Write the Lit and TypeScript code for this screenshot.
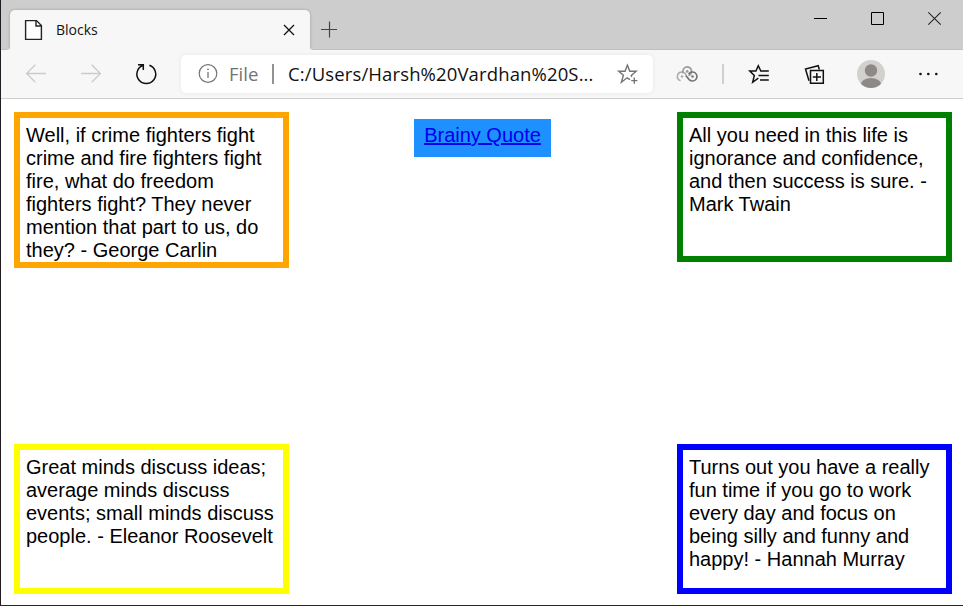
import { LitElement, html, css, svg } from "lit";
import { customElement, property } from "lit/decorators.js";

const icon = (box: string, w: number, h: number, body: unknown) =>
  html`<svg viewBox=${box} width=${w} height=${h} fill="none" stroke-linejoin="miter">${body}</svg>`;

@customElement("quote-card")
class QuoteCard extends LitElement {
  @property({ reflect: true }) tone = "orange";
  static styles = css`
    :host {
      display: block;
      box-sizing: border-box;
      width: 275px;
      min-height: 150px;
      padding: 6px 6px 0;
      border: 6px solid orange;
      font: 20px/23px "Liberation Sans", Arial, sans-serif;
      color: #000;
    }
    :host([tone="green"]) { border-color: green; }
    :host([tone="yellow"]) { border-color: yellow; }
    :host([tone="blue"]) { border-color: blue; }
  `;
  render() {
    return html`<slot></slot>`;
  }
}

@customElement("title-bar")
class TitleBar extends LitElement {
  static styles = css`
    :host {
      display: flex;
      height: 50px;
      box-sizing: border-box;
      background: #cdcdcd;
      box-shadow: inset 0 -1px #c0c0c0;
      font-family: "Open Sans", "Noto Sans", sans-serif;
    }
    svg { display: block; flex: none; }
    .tab {
      display: flex;
      align-items: center;
      box-sizing: border-box;
      width: 300px;
      height: 40px;
      margin: 10px 0 0 9px;
      padding: 0 15px 0 14px;
      background: #f7f7f7;
      border-radius: 5px 5px 0 0;
      box-shadow: 0 0 3px rgba(0, 0, 0, 0.25);
      clip-path: inset(-4px -4px 0 -4px);
    }
    .label {
      flex: 1;
      margin-left: 13px;
      font-size: 14px;
      letter-spacing: 0;
      line-height: 20px;
      color: #111;
    }
    .flare { align-self: flex-end; }
    .left { margin: 0 -4px 0 5px; }
    .left + .tab { margin-left: 4px; }
    .plus { margin: 20px 0 0 6px; }
    .controls { display: flex; gap: 43px; margin: 11px 21px 0 auto; }
  `;
  render() {
    return html`
      <svg class="flare left" width="4" height="4" viewBox="0 0 4 4"><path d="M0 4A4 4 0 0 0 4 0V4Z" fill="#f7f7f7" /></svg>
      <div class="tab">
        ${icon("24 19 19 22", 19, 22, svg`<path d="M25.6 20.6H36.5L41.4 25.5V39.4H25.6Z" fill="#fff" stroke="#222" stroke-width="1.4"/><path d="M36 20.5V26H41.5" stroke="#222" stroke-width="1.4"/>`)}
        <span class="label">Blocks</span>
        ${icon("283 25 12 12", 12, 12, svg`<path d="M284 26L294 36M294 26L284 36" stroke="#111" stroke-width="1.3"/>`)}
      </div>
      <svg class="flare" width="4" height="4" viewBox="0 0 4 4"><path d="M4 4A4 4 0 0 1 0 0V4Z" fill="#f7f7f7" /></svg>
      <div class="plus">
        ${icon("320 20 18 18", 18, 18, svg`<path d="M321 29.5H337M329.5 21.5V37.5" stroke="#444" stroke-width="1.2"/>`)}
      </div>
      <div class="controls">
        ${icon("814 11 14 15", 14, 15, svg`<path d="M814 18.5H827" stroke="#000"/>`)}
        ${icon("871 11 14 15", 14, 15, svg`<path d="M871.5 12.5H883.5V24.5H871.5Z" stroke="#000"/>`)}
        ${icon("928 11 14 15", 14, 15, svg`<path d="M928.3 12.3L940.7 24.7M940.7 12.3L928.3 24.7" stroke="#222" stroke-width="1.1"/>`)}
      </div>
    `;
  }
}

@customElement("tool-bar")
class ToolBar extends LitElement {
  static styles = css`
    :host {
      display: flex;
      align-items: center;
      height: 49px;
      box-sizing: border-box;
      border-bottom: 1px solid #cfcfcf;
      background: #f7f7f7;
      font-family: "Open Sans", "Noto Sans", sans-serif;
    }
    svg { display: block; flex: none; }
    .nav { display: flex; gap: 27px; margin: 0 21px; }
    .address {
      display: flex;
      align-items: center;
      box-sizing: border-box;
      width: 472px;
      height: 38px;
      padding: 0 11px 0 13px;
      background: #fff;
      border-radius: 5px;
      box-shadow: 0 0 4px rgba(0, 0, 0, 0.07);
      font-size: 18.5px;
      line-height: 24px;
      white-space: nowrap;
    }
    .scheme { width: 43px; margin-left: 7px; color: #737373; }
    .bar { width: 2px; height: 20px; background: #929292; }
    .url { flex: 1; margin-left: 14px; color: #111; letter-spacing: 0.13px; }
    .extension { margin-left: 20px; }
    .divider { width: 2px; height: 20px; margin: 0 21px; background: #cfcfcf; }
    .actions { display: flex; gap: 28px; }
  `;
  render() {
    return html`
      <div class="nav">
        ${icon("22 60 28 28", 28, 28, svg`<path d="M46 73.5H27M35.3 64.7L26.6 73.5L35.3 82.3" stroke="#cbcbcb" stroke-width="1.3"/>`)}
        ${icon("77 60 28 28", 28, 28, svg`<path d="M81 73.5H100M91.7 64.7L100.4 73.5L91.7 82.3" stroke="#cbcbcb" stroke-width="1.3"/>`)}
        ${icon("132 60 28 28", 28, 28, svg`<path d="M149.4 65.3A9.4 9.4 0 1 1 143.2 65.3M138 64.7H143.3V70" stroke="#111" stroke-width="1.5"/>`)}
      </div>
      <div class="address">
        ${icon("194 60 28 28", 28, 28, svg`<circle cx="208" cy="73.5" r="8.8" stroke="#747474" stroke-width="1.2"/><path d="M208 72V78" stroke="#747474" stroke-width="1.3"/><circle cx="208" cy="69.3" r=".9" fill="#747474"/>`)}
        <span class="scheme">File</span>
        <span class="bar"></span>
        <span class="url">C:/Users/Harsh%20Vardhan%20S...</span>
        ${icon("614 60 28 28", 28, 28, svg`<path d="M630 79.6L627.2 77.8L621.4 82.2L623.4 75.3L618.7 71.2H625L627.4 65.2L629.8 71.2H636.2L631.3 75.5L631.7 77" stroke="#747474" stroke-width="1.4"/><path d="M631.2 80.6H637.4M634.3 77.5V83.7" stroke="#747474" stroke-width="1.4"/>`)}
      </div>
      <div class="extension">
        ${icon("673 60 28 28", 28, 28, svg`
          <path d="M680.6 80.7A4.4 4.4 0 1 1 686.2 76.3" stroke="#b0b0b0" stroke-width="1.7"/>
          <path d="M683.2 73.2A4.4 4.4 0 1 1 688.4 75.6" stroke="#9c9c9c" stroke-width="1.7"/>
          <path d="M686 75.8L689.2 79.6A4.5 4.5 0 1 0 688.6 74.2" stroke="#777" stroke-width="1.7"/>
          <circle cx="682" cy="76.5" r="1.2" fill="#aaa"/><circle cx="687.2" cy="71.4" r="1.3" fill="#999"/><circle cx="692.5" cy="76.5" r="1.3" fill="#777"/>`)}
      </div>
      <div class="divider"></div>
      <div class="actions">
        ${icon("745 60 28 28", 28, 28, svg`<path d="M760.8 71L758.3 65.7L755.9 71H749.8L754.3 75.4L752.7 82.3L758.3 78.2M760.2 71.1H768.8M758.5 75.6H768.8M760 80.1H768.8" stroke="#111" stroke-width="1.5"/>`)}
        ${icon("801 60 28 28", 28, 28, svg`<path d="M809 80.7L805.5 69L818.2 65.7L819.3 69.5" stroke="#111" stroke-width="1.5"/><path d="M810.5 70.5H823.3V83.3H810.5ZM816.8 73V81M812.8 77H821" stroke="#111" stroke-width="1.5"/>`)}
        ${icon("857 60 28 28", 28, 28, svg`<clipPath id="face"><circle cx="871" cy="74" r="14"/></clipPath><circle cx="871" cy="74" r="14" fill="#d3d1ce"/><circle cx="871" cy="70.5" r="6.2" fill="#8d8986"/><ellipse cx="871" cy="84.8" rx="10.3" ry="6.8" fill="#8d8986" clip-path="url(#face)"/>`)}
        ${icon("913 60 28 28", 28, 28, svg`<g fill="#111"><circle cx="920.5" cy="74" r="1.3"/><circle cx="928.3" cy="74" r="1.3"/><circle cx="936.3" cy="74" r="1.3"/></g>`)}
      </div>
    `;
  }
}

@customElement("app-root")
class AppRoot extends LitElement {
  static styles = css`
    :host {
      display: flex;
      flex-direction: column;
      box-sizing: border-box;
      width: 963px;
      height: 606px;
      overflow: hidden;
      border-left: 1px solid #211b23;
      border-bottom: 1px solid #252428;
      background: #fff;
    }
    main {
      flex: 1;
      display: flex;
      flex-direction: column;
      justify-content: space-between;
      padding: 13px 11px 11px 13px;
    }
    .row { display: flex; justify-content: space-between; align-items: flex-start; }
    .link {
      margin: 7px 1px 0 0;
      padding: 5px 10px 10px;
      background: dodgerblue;
      font: 20px/23px "Liberation Sans", Arial, sans-serif;
      color: #0000ee;
      text-decoration: underline;
    }
  `;
  render() {
    return html`
      <title-bar></title-bar>
      <tool-bar></tool-bar>
      <main>
        <div class="row">
          <quote-card tone="orange">Well, if crime fighters fight crime and fire fighters fight fire, what do freedom fighters fight? They never mention that part to us, do they? - George Carlin</quote-card>
          <a class="link" href="#">Brainy Quote</a>
          <quote-card tone="green">All you need in this life is ignorance and confidence, and then success is sure. - Mark Twain</quote-card>
        </div>
        <div class="row">
          <quote-card tone="yellow">Great minds discuss ideas; average minds discuss events; small minds discuss people. - Eleanor Roosevelt</quote-card>
          <quote-card tone="blue">Turns out you have a really fun time if you go to work every day and focus on being silly and funny and happy! - Hannah Murray</quote-card>
        </div>
      </main>
    `;
  }
}
